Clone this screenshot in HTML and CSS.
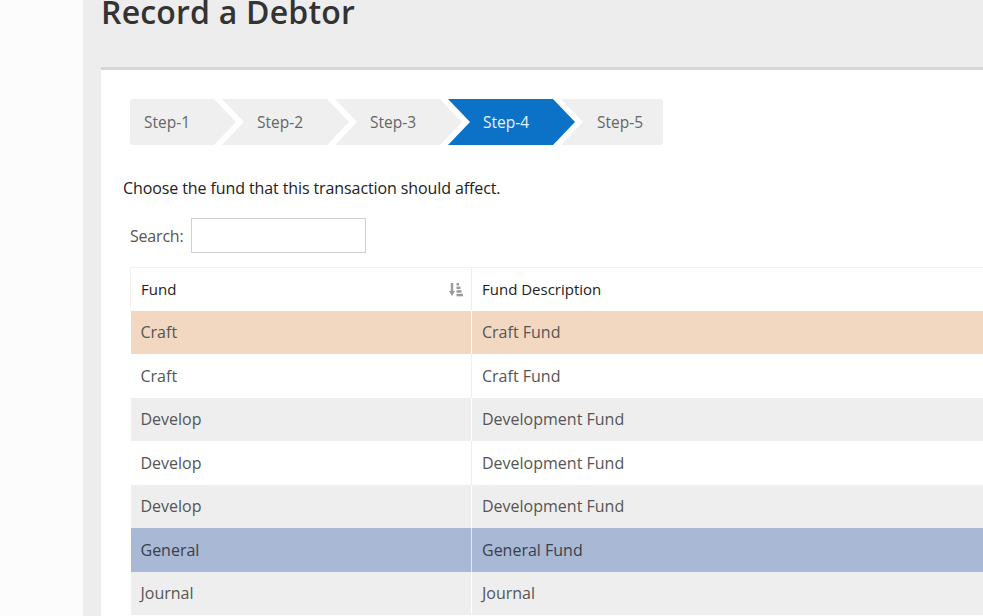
FILE: index.html
```html
<!DOCTYPE html>
<html>
<head>
<meta charset="utf-8">
<link rel="stylesheet" href="styles.css">
</head>
<body>
<div class="layout">
  <aside class="side"></aside>
  <main class="main">
    <h1 class="title">Record a Debtor</h1>
    <section class="panel">
      <nav class="steps">
        <div class="step first">Step-1</div>
        <div class="step">Step-2</div>
        <div class="step">Step-3</div>
        <div class="step active">Step-4</div>
        <div class="step last">Step-5</div>
      </nav>
      <p class="intro">Choose the fund that this transaction should affect.</p>
      <div class="search">
        <label class="search-label">Search:</label>
        <input class="search-input" type="text">
      </div>
      <table class="funds">
        <thead>
          <tr>
            <th class="col-fund"><div class="th-inner"><span>Fund</span>
              <svg class="sort" width="14" height="15" viewBox="0 0 14 15">
                <rect x="1.8" y="1" width="2.4" height="9" fill="#9a9a9a"/>
                <polygon points="0,9 6,9 3,14" fill="#9a9a9a"/>
                <rect x="7.5" y="1" width="2.5" height="2.5" fill="#9a9a9a"/>
                <rect x="7.5" y="4.6" width="4" height="2.5" fill="#9a9a9a"/>
                <rect x="7.5" y="8.2" width="5" height="2.5" fill="#9a9a9a"/>
                <rect x="7.5" y="11.8" width="6.5" height="2.5" fill="#9a9a9a"/>
              </svg></div></th>
            <th class="col-desc">Fund Description</th>
          </tr>
        </thead>
        <tbody>
          <tr class="odd hover"><td>Craft</td><td>Craft Fund</td></tr>
          <tr class="even"><td>Craft</td><td>Craft Fund</td></tr>
          <tr class="odd"><td>Develop</td><td>Development Fund</td></tr>
          <tr class="even"><td>Develop</td><td>Development Fund</td></tr>
          <tr class="odd"><td>Develop</td><td>Development Fund</td></tr>
          <tr class="even selected"><td>General</td><td>General Fund</td></tr>
          <tr class="odd"><td>Journal</td><td>Journal</td></tr>
        </tbody>
      </table>
    </section>
  </main>
</div>
</body>
</html>
```

FILE: styles.css
```css
html, body {
  margin: 0;
  padding: 0;
  height: 100%;
  overflow: hidden;
}
body {
  font-family: "Open Sans", "Liberation Sans", sans-serif;
  background: #fcfcfc;
}
.layout {
  display: flex;
  height: 616px;
}
.side {
  width: 83px;
  flex: none;
  background: #fcfcfc;
}
.main {
  flex: 1;
  background: #eeeded;
  padding-left: 18px;
  overflow: hidden;
}
.title {
  margin: -9px 0 0 0;
  height: 76px;
  font-size: 32px;
  font-weight: 600;
  color: #333;
  line-height: 42px;
  letter-spacing: 0.2px;
}
.panel {
  background: #fff;
  border-top: 3px solid #d6d6da;
  padding: 29px 0 0 29px;
  height: 600px;
}
.steps {
  display: flex;
  height: 46px;
}
.step {
  height: 46px;
  width: 127px;
  margin-left: -14px;
  background: #efefef;
  color: #666;
  font-size: 15.5px;
  line-height: 46px;
  padding-left: 35px;
  box-sizing: border-box;
  clip-path: polygon(0 0, calc(100% - 22px) 0, 100% 50%, calc(100% - 22px) 100%, 0 100%, 22px 50%);
  font-weight: 400;
}
.step.first {
  margin-left: 0;
  width: 106px;
  padding-left: 14px;
  clip-path: polygon(0 0, calc(100% - 22px) 0, 100% 50%, calc(100% - 22px) 100%, 0 100%);
  border-radius: 3px 0 0 3px;
}
.step.last {
  width: 102px;
  padding-left: 36px;
  clip-path: polygon(0 0, 100% 0, 100% 100%, 0 100%, 22px 50%);
  border-radius: 0 3px 3px 0;
}
.step.active {
  background: #0b72c7;
  color: #e8f3ff;
}
.intro {
  margin: 0;
  margin-left: -7px;
  margin-top: 32px;
  font-size: 16px;
  color: #222;
  line-height: 22px;
  letter-spacing: -0.1px;
}
.search {
  display: flex;
  align-items: center;
  margin-top: 19px;
  height: 35px;
}
.search-label {
  font-size: 16px;
  color: #555;
  margin-right: 8px;
  letter-spacing: -0.2px;
}
.search-input {
  width: 175px;
  height: 35px;
  box-sizing: border-box;
  border: 1px solid #d0d0d0;
  margin: 0;
  padding: 0 6px;
}
.funds {
  margin-top: 14px;
  border-collapse: collapse;
  width: 900px;
  table-layout: fixed;
}
.funds th {
  height: 43px;
  text-align: left;
  font-weight: 400;
  color: #222;
  font-size: 15px;
  padding: 0 10px;
  border-top: 1px solid #f1f1f1;
  box-sizing: border-box;
}
.funds th.col-fund {
  width: 341px;
  border-left: 1px solid #f1f1f1;
  border-right: 1px solid #eeeeee;
  padding-right: 8px;
}
.th-inner {
  display: flex;
  justify-content: space-between;
  align-items: center;
}
.funds td {
  height: 43.5px;
  padding: 0 10px;
  font-size: 16px;
  color: #555;
  box-sizing: border-box;
}
.funds td:first-child {
  border-right: 1px solid #fff;
}
.funds tr.odd td {
  background: #efeeee;
}
.funds tr.even td {
  background: #fff;
}
.funds tr.even td:first-child {
  border-right-color: #eeeeee;
}
.funds tr.hover td {
  background: #f2d8c1;
}
.funds tr.selected td {
  background: #a9b8d4;
  color: #3a3f4a;
}
.funds tr.selected td:first-child {
  border-right-color: #e4e8f0;
}
```
